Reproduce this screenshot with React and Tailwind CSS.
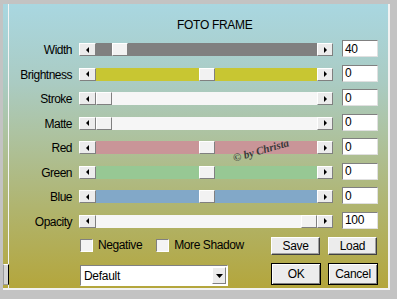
const rows = [
  { label: 'Width', track: 'bg-[#808080]', thumb: 16, value: '40' },
  { label: 'Brightness', track: 'bg-[#c8c632]', thumb: 103, value: '0' },
  { label: 'Stroke', track: 'bg-[#f6f6f6]', thumb: 0, value: '0' },
  { label: 'Matte', track: 'bg-[#f6f6f6]', thumb: 0, value: '0' },
  { label: 'Red', track: 'bg-[#c99598]', thumb: 103, value: '0' },
  { label: 'Green', track: 'bg-[#97c894]', thumb: 103, value: '0' },
  { label: 'Blue', track: 'bg-[#82a8c8]', thumb: 103, value: '0' },
  { label: 'Opacity', track: 'bg-[#f6f6f6]', thumb: 205, value: '100' },
];

const font = { fontFamily: '"Liberation Sans", Arial, sans-serif' };

function Arrow({ dir }) {
  return (
    <svg width="4" height="6" viewBox="0 0 4 6">
      {dir === 'left' ? <path d="M3 0V6L0 3Z" fill="#000" /> : <path d="M1 0V6L4 3Z" fill="#000" />}
    </svg>
  );
}

function Raised({ className = '', children }) {
  return (
    <div
      className={`flex items-center justify-center bg-[#ececec] border border-t-white border-l-white border-r-[#808080] border-b-[#808080] ${className}`}
    >
      {children}
    </div>
  );
}

function Slider({ track, thumb }) {
  return (
    <div className="flex h-[13px] w-[254px]">
      <Raised className="w-[17px] h-[13px]">
        <Arrow dir="left" />
      </Raised>
      <div className={`relative flex-1 ${track}`}>
        <div
          className="absolute top-0 h-[13px] w-[16px] bg-[#f2f2f2] border border-t-white border-l-white border-r-[#808080] border-b-[#808080]"
          style={{ left: thumb }}
        />
      </div>
      <Raised className="w-[16px] h-[13px]">
        <Arrow dir="right" />
      </Raised>
    </div>
  );
}

function Button({ children, def }) {
  return (
    <div
      className={`flex items-center justify-center bg-[#ececec] text-[12px] tracking-[-0.3px] text-black ${
        def
          ? 'w-[50px] h-[22px] border border-black shadow-[inset_1px_1px_0_#fff,inset_-1px_-1px_0_#808080]'
          : 'w-[49px] h-[18px] border border-t-white border-l-white border-r-[#404040] border-b-[#404040] shadow-[inset_-1px_-1px_0_#a0a0a0]'
      }`}
    >
      {children}
    </div>
  );
}

function Check({ label }) {
  return (
    <div className="flex items-center gap-[5px]">
      <div className="w-[13px] h-[13px] bg-[#f4f4f4] border border-t-[#808080] border-l-[#808080] border-r-white border-b-white" />
      <span className="text-[12px] leading-[13px] tracking-[-0.4px] text-black">{label}</span>
    </div>
  );
}

export default function App() {
  return (
    <div className="w-[397px] h-[299px] bg-[#c3c3c3] pt-[4px] pl-[3px] pr-[7px] pb-[9px] overflow-hidden" style={font}>
      <div className="relative flex h-full bg-[linear-gradient(180deg,#a9d7e1_0%,#aacbc2_28%,#adc3a2_45%,#b0b46e_72%,#b4a63c_100%)] border-r-2 border-b-2 border-r-[#f2f2f2] border-b-[#f2f2f2]">
        <div className="flex w-[6px] flex-col justify-end border-r border-r-[#f4f4f4] pb-[3px]">
          <div className="h-[21px] w-[6px] bg-[#d6d6d6] border border-t-white border-l-[#9a9a9a] border-b-[#9a9a9a]" />
        </div>
        <div className="relative flex-1">
          <div className="h-[39px] pt-[15px] pl-[168px] text-[12px] tracking-[-0.3px] text-black leading-[13px]">FOTO FRAME</div>
          <div className="flex flex-col">
            {rows.map((r) => (
              <div key={r.label} className="flex h-[24.5px] items-start">
                <div className="w-[63px] pt-[1px] text-right text-[12px] leading-[13px] tracking-[-0.5px] text-black">{r.label}</div>
                <div className="ml-[7px]">
                  <Slider track={r.track} thumb={r.thumb} />
                </div>
                <div className="ml-[9px] -mt-[3px] flex h-[17px] w-[36px] items-center bg-white pl-[2px] text-[12px] tracking-[-0.3px] text-black border border-t-[#808080] border-l-[#808080] border-r-[#e0e0e0] border-b-[#e0e0e0]">
                  {r.value}
                </div>
              </div>
            ))}
          </div>
          <div className="flex pl-[71px]">
            <div className="flex w-[191px] flex-col">
              <div className="flex gap-[14px] pt-[0px]">
                <Check label="Negative" />
                <Check label="More Shadow" />
              </div>
              <div className="mt-[13px] flex h-[21px] w-[148px] items-center justify-between bg-white border border-t-[#808080] border-l-[#808080] border-r-white border-b-white">
                <span className="pl-[3px] text-[12px] tracking-[-0.3px] text-black">Default</span>
                <div className="mr-[1px] flex h-[17px] w-[14px] items-center justify-center bg-[#ececec] border border-t-white border-l-white border-r-[#808080] border-b-[#808080]">
                  <svg width="7" height="4" viewBox="0 0 7 4"><path d="M0 0H7L3.5 4Z" fill="#000" /></svg>
                </div>
              </div>
            </div>
            <div className="-mt-[2px] grid grid-cols-[49px_50px] gap-x-[8px] gap-y-[7px]">
              <Button>Save</Button>
              <Button>Load</Button>
              <Button def>OK</Button>
              <Button def>Cancel</Button>
            </div>
          </div>
          <div
            className="absolute left-[223px] top-[138px] -rotate-[16deg] text-[11px] font-semibold italic text-[#3a3a3a]"
            style={{ fontFamily: '"Liberation Serif", serif' }}
          >
            © by Christa
          </div>
        </div>
      </div>
    </div>
  );
}
